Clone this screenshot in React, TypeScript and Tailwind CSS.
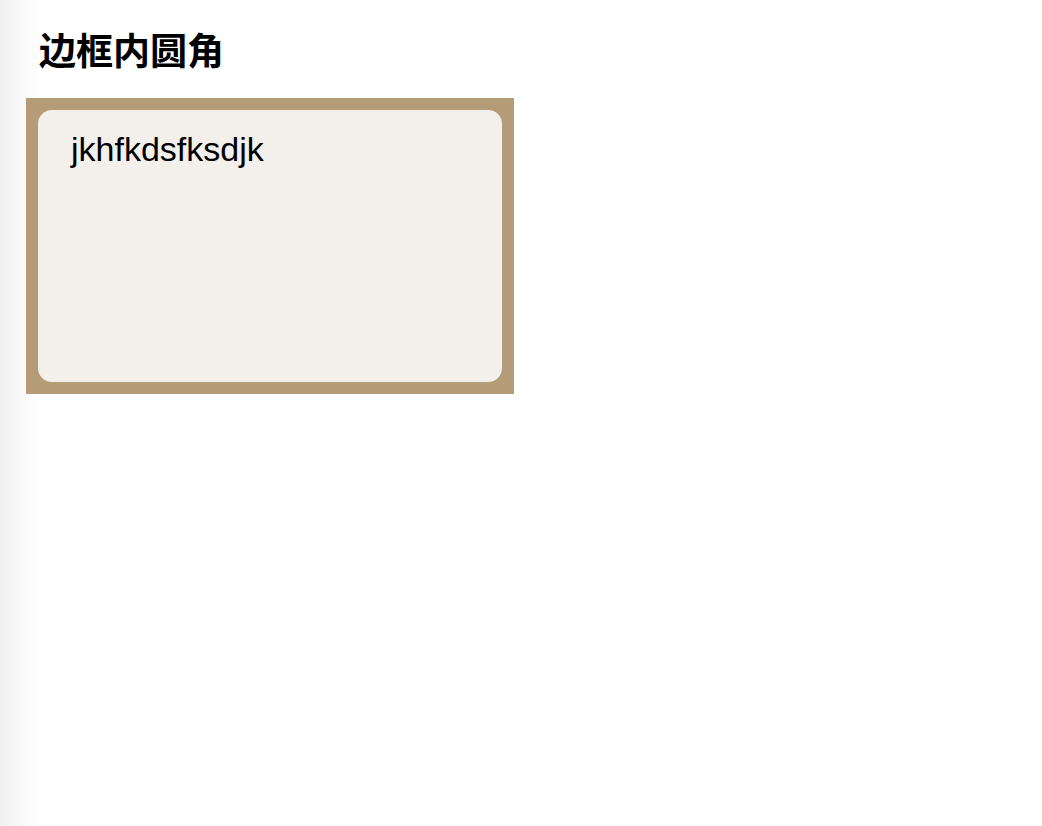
export default function App() {
  return (
    <div
      className="min-h-screen w-full bg-[linear-gradient(to_right,#f1f1f1_0px,#fbfbfb_28px,#ffffff_44px)] pl-[26px] pt-[22px]"
      style={{ fontFamily: '"Liberation Sans", "Noto Sans CJK SC", sans-serif' }}
    >
      <h2
        className="ml-[13px] text-[37px] font-bold leading-[54px] text-black"
        style={{ fontFamily: '"Noto Sans CJK SC", sans-serif' }}
      >
        边框内圆角
      </h2>
      <div className="mt-[22px] w-[488px] h-[296px] bg-[#b49c78] p-[12px]">
        <div className="h-full w-full rounded-[14px] bg-[#f3f0eb] pl-[33px] pt-[20px]">
          <p className="text-[34px] leading-[38px] text-black">jkhfkdsfksdjk</p>
        </div>
      </div>
    </div>
  );
}
